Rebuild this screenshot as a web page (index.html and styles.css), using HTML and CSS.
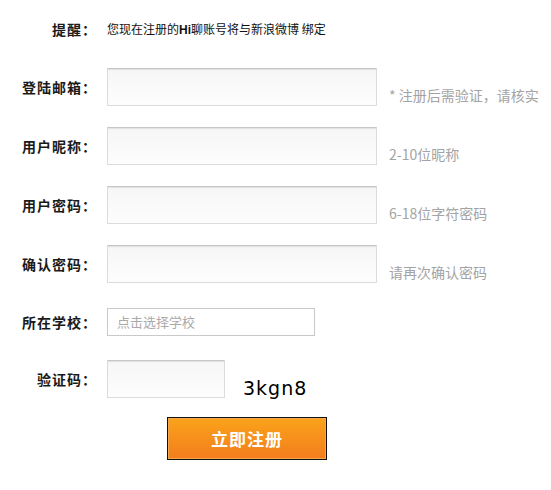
FILE: index.html
```html
<!DOCTYPE html>
<html lang="zh-CN">
<head>
<meta charset="utf-8">
<title>注册</title>
<link rel="stylesheet" href="styles.css">
</head>
<body>
<div class="form">
  <div class="row notice">
    <span class="label">提醒：</span>
    <span class="notice-text">您现在注册的<b>Hi</b>聊账号将与新浪微博 绑定</span>
  </div>
  <div class="row field">
    <span class="label">登陆邮箱：</span>
    <div class="input"></div>
    <span class="hint">* 注册后需验证，请核实</span>
  </div>
  <div class="row field">
    <span class="label">用户昵称：</span>
    <div class="input"></div>
    <span class="hint">2-10位昵称</span>
  </div>
  <div class="row field">
    <span class="label">用户密码：</span>
    <div class="input"></div>
    <span class="hint">6-18位字符密码</span>
  </div>
  <div class="row field">
    <span class="label">确认密码：</span>
    <div class="input"></div>
    <span class="hint">请再次确认密码</span>
  </div>
  <div class="row school">
    <span class="label">所在学校：</span>
    <div class="select">点击选择学校</div>
  </div>
  <div class="row captcha">
    <span class="label">验证码：</span>
    <div class="input small"></div>
    <span class="code">3kgn8</span>
  </div>
  <div class="actions">
    <button class="submit" type="button">立即注册</button>
  </div>
</div>
</body>
</html>
```
FILE: styles.css
```css
* { box-sizing: border-box; }
html, body { margin: 0; padding: 0; background: #fff; }
body {
  font-family: "Noto Sans CJK SC", "Liberation Sans", sans-serif;
  color: #222;
  width: 551px;
  height: 490px;
  overflow: hidden;
}
.form { padding-top: 19px; }
.row { display: flex; }
.label {
  width: 97px;
  flex: none;
  text-align: right;
  font-size: 14px;
  font-weight: bold;
  letter-spacing: 1px;
  color: #1a1a1a;
  margin-right: 10px;
  align-self: center;
  line-height: 20px;
}
.notice { height: 20px; align-items: center; margin-bottom: 29px; }
.notice-text { font-size: 12px; line-height: 20px; color: #111; white-space: nowrap; }
.notice-text b { font-family: "Liberation Sans", sans-serif; font-weight: bold; }
.field { height: 38px; margin-bottom: 21px; }
.input {
  width: 270px;
  height: 38px;
  border: 1px solid #dcdcdc;
  border-top-color: #c6c6c6;
  background: linear-gradient(#f6f6f6, #fdfdfd);
  box-shadow: inset 0 2px 1px -1px #e2e2e2;
  flex: none;
}
.input.small { width: 118px; }
.hint {
  align-self: flex-end;
  margin-left: 12px;
  margin-bottom: 2px;
  font-size: 14px;
  line-height: 18px;
  color: #a3a3a3;
  white-space: nowrap;
}
.school { height: 28px; margin-top: 25px; }
.select {
  width: 208px;
  height: 28px;
  border: 1px solid #c9c9c9;
  background: #fff;
  font-size: 13px;
  line-height: 26px;
  color: #aaa;
  padding-left: 9px;
}
.captcha { height: 38px; margin-top: 24px; }
.code {
  align-self: flex-end;
  margin-left: 18px;
  margin-bottom: -1px;
  font-family: "DejaVu Sans", sans-serif;
  font-size: 19px;
  letter-spacing: 1px;
  line-height: 22px;
  color: #000;
}
.actions { padding-left: 167px; margin-top: 19px; }
.submit {
  display: block;
  width: 160px;
  height: 43px;
  border: 1px solid #111;
  box-shadow: inset 0 0 0 1px #f7a94a;
  background: linear-gradient(#faa319, #f37d1f);
  color: #fff;
  font-family: "Noto Sans CJK SC", sans-serif;
  font-size: 17px;
  font-weight: bold;
  letter-spacing: 1px;
  padding: 0;
  cursor: pointer;
}
```
